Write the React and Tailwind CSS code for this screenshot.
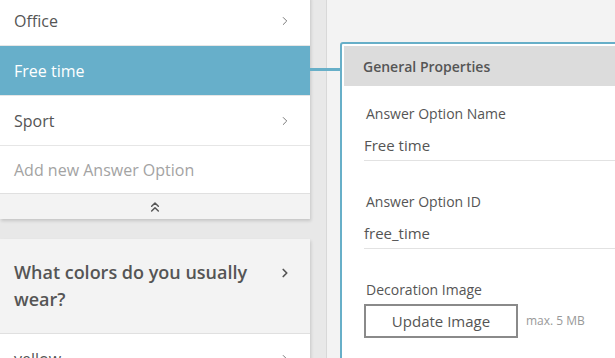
import React from "react";
import { ChevronRight, ChevronsUp } from "lucide-react";

const font = { fontFamily: '"Open Sans", "Liberation Sans", sans-serif' };

function Row({ label, active, muted, chevron = true }) {
  return (
    <div
      className={
        "flex items-center justify-between h-[50px] pl-[14px] pr-[18px] border-b border-[#e6e6e6] text-[16px] " +
        (active ? "bg-[#67afca] text-white" : muted ? "bg-white text-[#a3a3a3]" : "bg-white text-[#555]")
      }
    >
      <span>{label}</span>
      {chevron && !active && !muted && <ChevronRight className="w-[14px] h-[14px] text-[#666]" strokeWidth={1.5} />}
    </div>
  );
}

function Field({ label, value }) {
  return (
    <div className="pt-[16px]">
      <div className="text-[14px] text-[#555] pl-[2px] leading-[20px]">{label}</div>
      <div className="mt-[10px] text-[15px] text-[#555] leading-[22px] pb-[4px] border-b border-[#e2e2e2]">{value}</div>
    </div>
  );
}

export default function App() {
  return (
    <div className="relative flex w-[615px] h-[358px] overflow-hidden bg-[#f3f3f3]" style={font}>
      {/* left column with question cards */}
      <div className="w-[327px] shrink-0 bg-[#e8e8e8] border-r border-[#d8d8d8] pr-[16px]">
        <div className="w-[310px] -mt-[4px] bg-white shadow-[1px_2px_3px_rgba(0,0,0,0.15)]">
          <Row label="Office" />
          <Row label="Free time" active />
          <Row label="Sport" />
          <div className="flex items-center h-[48px] pl-[14px] border-b border-[#e0e0e0] text-[16px] text-[#a3a3a3]">
            Add new Answer Option
          </div>
          <div className="flex items-center justify-center h-[25px] bg-[#f3f3f3] text-[#555]">
            <ChevronsUp className="w-[16px] h-[16px]" strokeWidth={2.2} />
          </div>
        </div>

        <div className="w-[310px] mt-[20px] bg-white shadow-[1px_2px_3px_rgba(0,0,0,0.15)]">
          <div className="flex justify-between items-start h-[95px] bg-[#f3f3f3] border-b border-[#e0e0e0] pl-[14px] pr-[18px] pt-[20px]">
            <div className="text-[18px] font-semibold text-[#555] leading-[27px]">
              What colors do you usually
              <br />
              wear?
            </div>
            <ChevronRight className="w-[14px] h-[14px] mt-[7px] text-[#555]" strokeWidth={3} />
          </div>
          <Row label="yellow" />
        </div>
      </div>

      {/* connector from active row to properties panel */}
      <div className="absolute left-[310px] top-[68px] w-[31px] h-[3px] bg-[#67afc8]" />

      {/* right properties panel */}
      <div className="flex-1 pl-[13px] pt-[42px]">
        <div className="w-[320px] h-[330px] bg-white border-2 border-[#67afc8] rounded-tl-[3px] p-[2px]">
          <div className="h-[40px] bg-[#dcdcdc] flex items-center pl-[19px] text-[14px] font-semibold text-[#555]">
            General Properties
          </div>
          <div className="pl-[20px]">
            <div className="pt-[2px]">
              <Field label="Answer Option Name" value="Free time" />
            </div>
            <div className="pt-[15px]">
              <Field label="Answer Option ID" value="free_time" />
            </div>
            <div className="pt-[31px]">
              <div className="text-[14px] text-[#555] pl-[2px] leading-[20px]">Decoration Image</div>
              <div className="flex items-center mt-[4px]">
                <div className="w-[154px] h-[34px] border-2 border-[#8a8a8a] flex items-center justify-center text-[15px] text-[#555]">
                  Update Image
                </div>
                <span className="ml-[8px] text-[12px] text-[#999]">max. 5 MB</span>
              </div>
            </div>
          </div>
        </div>
      </div>
    </div>
  );
}
